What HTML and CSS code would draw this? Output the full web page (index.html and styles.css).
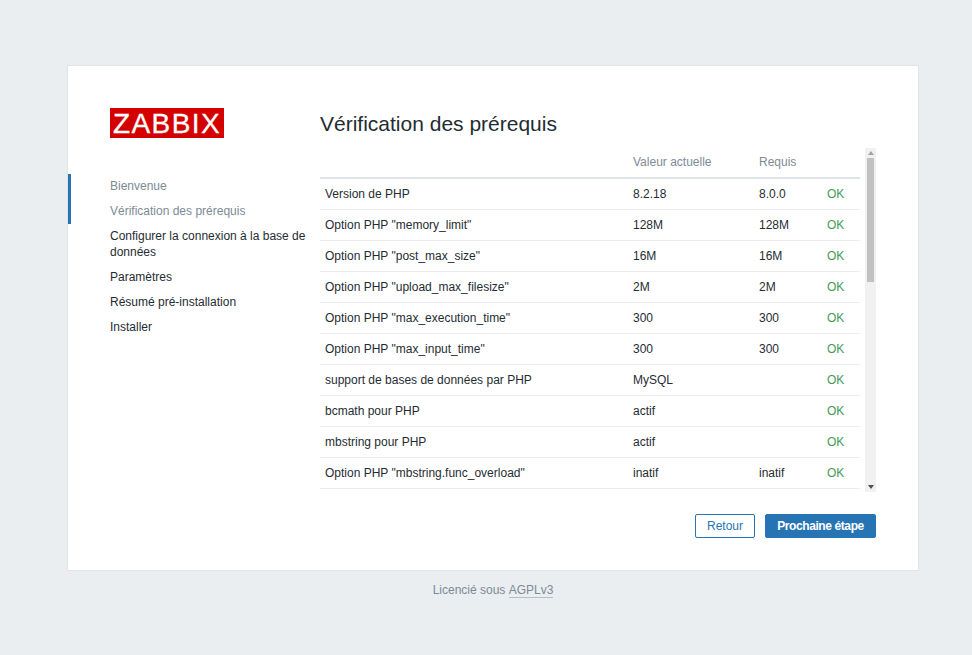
FILE: index.html

```html
<!DOCTYPE html>
<html lang="fr">
  <head>
    <meta charset="UTF-8" />
    <title>Installation de Zabbix</title>
    <link rel="stylesheet" href="styles.css">
  </head>
  <body>
    <div class="page">
      <div class="card">
        <div class="sidebar">
          <div class="logo">ZABBIX</div>
          <ul class="steps">
            <li class="done">Bienvenue</li>
            <li class="done">Vérification des prérequis</li>
            <li>Configurer la connexion à la base de données</li>
            <li>Paramètres</li>
            <li>Résumé pré-installation</li>
            <li>Installer</li>
          </ul>
        </div>
        <div class="main">
          <h1 class="title">Vérification des prérequis</h1>
          <div class="scroller">
            <table class="checks">
              <thead>
                <tr>
                  <th class="col-name"></th>
                  <th class="col-value">Valeur actuelle</th>
                  <th class="col-req">Requis</th>
                  <th class="col-state"></th>
                </tr>
              </thead>
              <tbody>
                <tr><td>Version de PHP</td><td>8.2.18</td><td>8.0.0</td><td class="ok">OK</td></tr>
                <tr><td>Option PHP "memory_limit"</td><td>128M</td><td>128M</td><td class="ok">OK</td></tr>
                <tr><td>Option PHP "post_max_size"</td><td>16M</td><td>16M</td><td class="ok">OK</td></tr>
                <tr><td>Option PHP "upload_max_filesize"</td><td>2M</td><td>2M</td><td class="ok">OK</td></tr>
                <tr><td>Option PHP "max_execution_time"</td><td>300</td><td>300</td><td class="ok">OK</td></tr>
                <tr><td>Option PHP "max_input_time"</td><td>300</td><td>300</td><td class="ok">OK</td></tr>
                <tr><td>support de bases de données par PHP</td><td>MySQL</td><td></td><td class="ok">OK</td></tr>
                <tr><td>bcmath pour PHP</td><td>actif</td><td></td><td class="ok">OK</td></tr>
                <tr><td>mbstring pour PHP</td><td>actif</td><td></td><td class="ok">OK</td></tr>
                <tr><td>Option PHP "mbstring.func_overload"</td><td>inatif</td><td>inatif</td><td class="ok">OK</td></tr>
              </tbody>
            </table>
            <div class="scrollbar">
              <div class="arrow"><span class="arrow-up"></span></div>
              <div class="track"><div class="thumb"></div></div>
              <div class="arrow"><span class="arrow-down"></span></div>
            </div>
          </div>
          <div class="actions">
            <button class="btn btn-alt">Retour</button>
            <button class="btn btn-primary">Prochaine étape</button>
          </div>
        </div>
      </div>
      <div class="footer">Licencié sous <a class="licence" href="#">AGPLv3</a></div>
    </div>
  </body>
</html>
```

FILE: styles.css

```css
body {
    margin: 0;
    background-color: #ebeef0;
    color: #1f2c33;
    font-family: "Liberation Sans", Arial, sans-serif;
    font-size: 12px;
}

.page {
    width: 852px;
    margin-left: 67px;
    padding-top: 65px;
}

.card {
    display: flex;
    box-sizing: border-box;
    height: 506px;
    background-color: #ffffff;
    border: 1px solid #dfe4e7;
}

.sidebar {
    flex: none;
    width: 252px;
    padding-top: 42px;
}

.logo {
    width: 114px;
    height: 30px;
    margin-left: 42px;
    background-color: #d40000;
    color: #ffffff;
    font-size: 28px;
    line-height: 31px;
    letter-spacing: 1.4px;
    text-align: center;
    -webkit-text-stroke: 0.3px #ffffff;
}

.steps {
    margin: 36px 0 0;
    padding: 0;
    list-style: none;
}

.steps li {
    padding: 4px 10px 5px 42px;
    line-height: 16px;
}

.steps li.done {
    padding-left: 39px;
    border-left: 3px solid #2774b5;
    color: #7c8a96;
}

.main {
    width: 556px;
}

.title {
    margin: 46px 0 12px;
    font-size: 21px;
    font-weight: normal;
    line-height: 24px;
}

.scroller {
    display: flex;
    align-items: flex-start;
    gap: 5px;
    height: 344px;
}

.scrollbar {
    display: flex;
    flex-direction: column;
    flex: none;
    width: 11px;
    height: 100%;
    background-color: #f1f1f1;
}

.arrow {
    display: flex;
    flex: none;
    align-items: center;
    justify-content: center;
    height: 10px;
}

.arrow-up {
    border-left: 3px solid transparent;
    border-right: 3px solid transparent;
    border-bottom: 4px solid #a3a3a3;
}

.arrow-down {
    border-left: 3px solid transparent;
    border-right: 3px solid transparent;
    border-top: 4px solid #505050;
}

.track {
    flex: 1;
    padding: 0 2px;
}

.thumb {
    height: 124px;
    background-color: #c1c1c1;
}

.checks {
    flex: none;
    width: 540px;
    table-layout: fixed;
    border-collapse: collapse;
}

.checks th {
    height: 28px;
    padding: 0 5px 1px;
    border-bottom: 2px solid #dfe4e7;
    color: #7c8a96;
    font-weight: normal;
    text-align: left;
}

.checks td {
    height: 30px;
    padding: 0 5px;
    border-bottom: 1px solid #ebeef0;
    white-space: nowrap;
}

.col-name {
    width: 298px;
}

.col-value {
    width: 116px;
}

.col-req {
    width: 58px;
}

.checks td.ok {
    color: #439a55;
}

.actions {
    display: flex;
    justify-content: flex-end;
    gap: 10px;
    margin-top: 22px;
}

.btn {
    box-sizing: border-box;
    height: 24px;
    padding: 0;
    border: 1px solid #2774b5;
    border-radius: 2px;
    font-family: inherit;
    font-size: 12px;
}

.btn-alt {
    width: 60px;
    background-color: #ffffff;
    color: #2774b5;
}

.btn-primary {
    width: 111px;
    background-color: #2774b5;
    color: #ffffff;
    font-weight: bold;
    letter-spacing: -0.4px;
}

.footer {
    margin-top: 12px;
    color: #7c8a96;
    line-height: 14px;
    text-align: center;
}

.licence {
    display: inline-block;
    color: #7c8a96;
    text-decoration: none;
    border-bottom: 1px solid #b4c0c7;
}
```
